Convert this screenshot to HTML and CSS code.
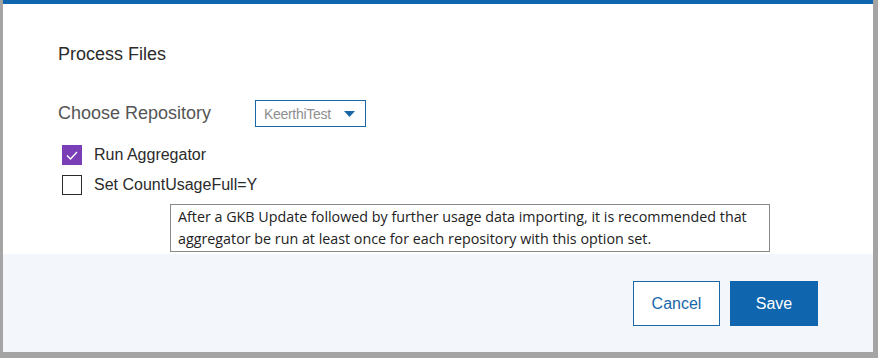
FILE: index.html
```html
<!DOCTYPE html>
<html lang="en">
<head>
  <meta charset="UTF-8" />
  <title>Process Files</title>
  <link rel="stylesheet" href="styles.css">
</head>
<body>
  <div class="dialog">
    <div class="dialog-body">
      <h2 class="dialog-title">Process Files</h2>

      <div class="repo-row">
        <span class="repo-label">Choose Repository</span>
        <div class="select">
          <span class="select-value">KeerthiTest</span>
          <svg class="select-arrow" width="11" height="6" viewBox="0 0 11 6"><path d="M0 0h11L5.5 6z" fill="#1a67a8"/></svg>
        </div>
      </div>

      <label class="check-row">
        <span class="box checked">
          <svg width="12" height="9" viewBox="0 0 12 9"><path d="M1 4.5l3.5 3.5L11 1" fill="none" stroke="#fff" stroke-width="1.4"/></svg>
        </span>
        Run Aggregator
      </label>
      <label class="check-row">
        <span class="box"></span>
        Set CountUsageFull=Y
      </label>

      <div class="tip">
        After a GKB Update followed by further usage data importing, it is recommended that
        aggregator be run at least once for each repository with this option set.
      </div>
    </div>

    <div class="dialog-footer">
      <button class="btn btn-cancel">Cancel</button>
      <button class="btn btn-save">Save</button>
    </div>
  </div>
</body>
</html>
```

FILE: styles.css
```css
body {
  margin: 0;
  padding: 0 5px 0 3px;
  background: #a4a4a4;
  font-family: "Liberation Sans", Arial, sans-serif;
}
.dialog {
  width: 870px;
  height: 352px;
  background: #ffffff;
  border-top: 4px solid #0f66ae;
  box-sizing: border-box;
  display: flex;
  flex-direction: column;
}
.dialog-body {
  height: 250px;
  padding: 40px 0 0 55px;
  box-sizing: border-box;
}
.dialog-title {
  margin: 0;
  font-size: 18px;
  font-weight: normal;
  color: #2b2b2b;
  line-height: 20px;
}
.repo-row {
  display: flex;
  align-items: center;
  margin-top: 36px;
}
.repo-label {
  width: 197px;
  font-size: 18px;
  color: #555555;
}
.select {
  width: 111px;
  height: 27px;
  box-sizing: border-box;
  border: 1px solid #1a67a8;
  display: flex;
  align-items: center;
  justify-content: space-between;
  padding: 0 10px 0 8px;
}
.select-value {
  font-size: 14px;
  color: #8f8f8f;
  letter-spacing: -0.3px;
}
.check-row {
  display: flex;
  align-items: center;
  height: 20px;
  margin-top: 18px;
  font-size: 16px;
  color: #2b2b2b;
}
.check-row + .check-row {
  margin-top: 10px;
}
.box {
  width: 20px;
  height: 20px;
  box-sizing: border-box;
  border: 1px solid #2b2b2b;
  margin: 0 12px 0 4px;
  display: flex;
  align-items: center;
  justify-content: center;
}
.box.checked {
  background: #7a3fb6;
  border-color: #7a3fb6;
}
.tip {
  width: 600px;
  margin: 9px 0 0 112px;
  box-sizing: border-box;
  border: 1px solid #8a8a8a;
  padding: 1px 7px 1px;
  font-family: "Open Sans", sans-serif;
  font-size: 14.3px;
  line-height: 22px;
  color: #222222;
}
.dialog-footer {
  flex: 1;
  background: #f3f6fa;
  display: flex;
  justify-content: flex-end;
  align-items: flex-start;
  padding: 27px 55px 0 0;
  gap: 10px;
}
.btn {
  height: 45px;
  font-family: "Liberation Sans", Arial, sans-serif;
  font-size: 16px;
  cursor: pointer;
}
.btn-cancel {
  width: 87px;
  background: #ffffff;
  border: 1px solid #1a67a8;
  color: #1a67a8;
}
.btn-save {
  width: 88px;
  background: #0f66ae;
  border: none;
  color: #ffffff;
}
```
